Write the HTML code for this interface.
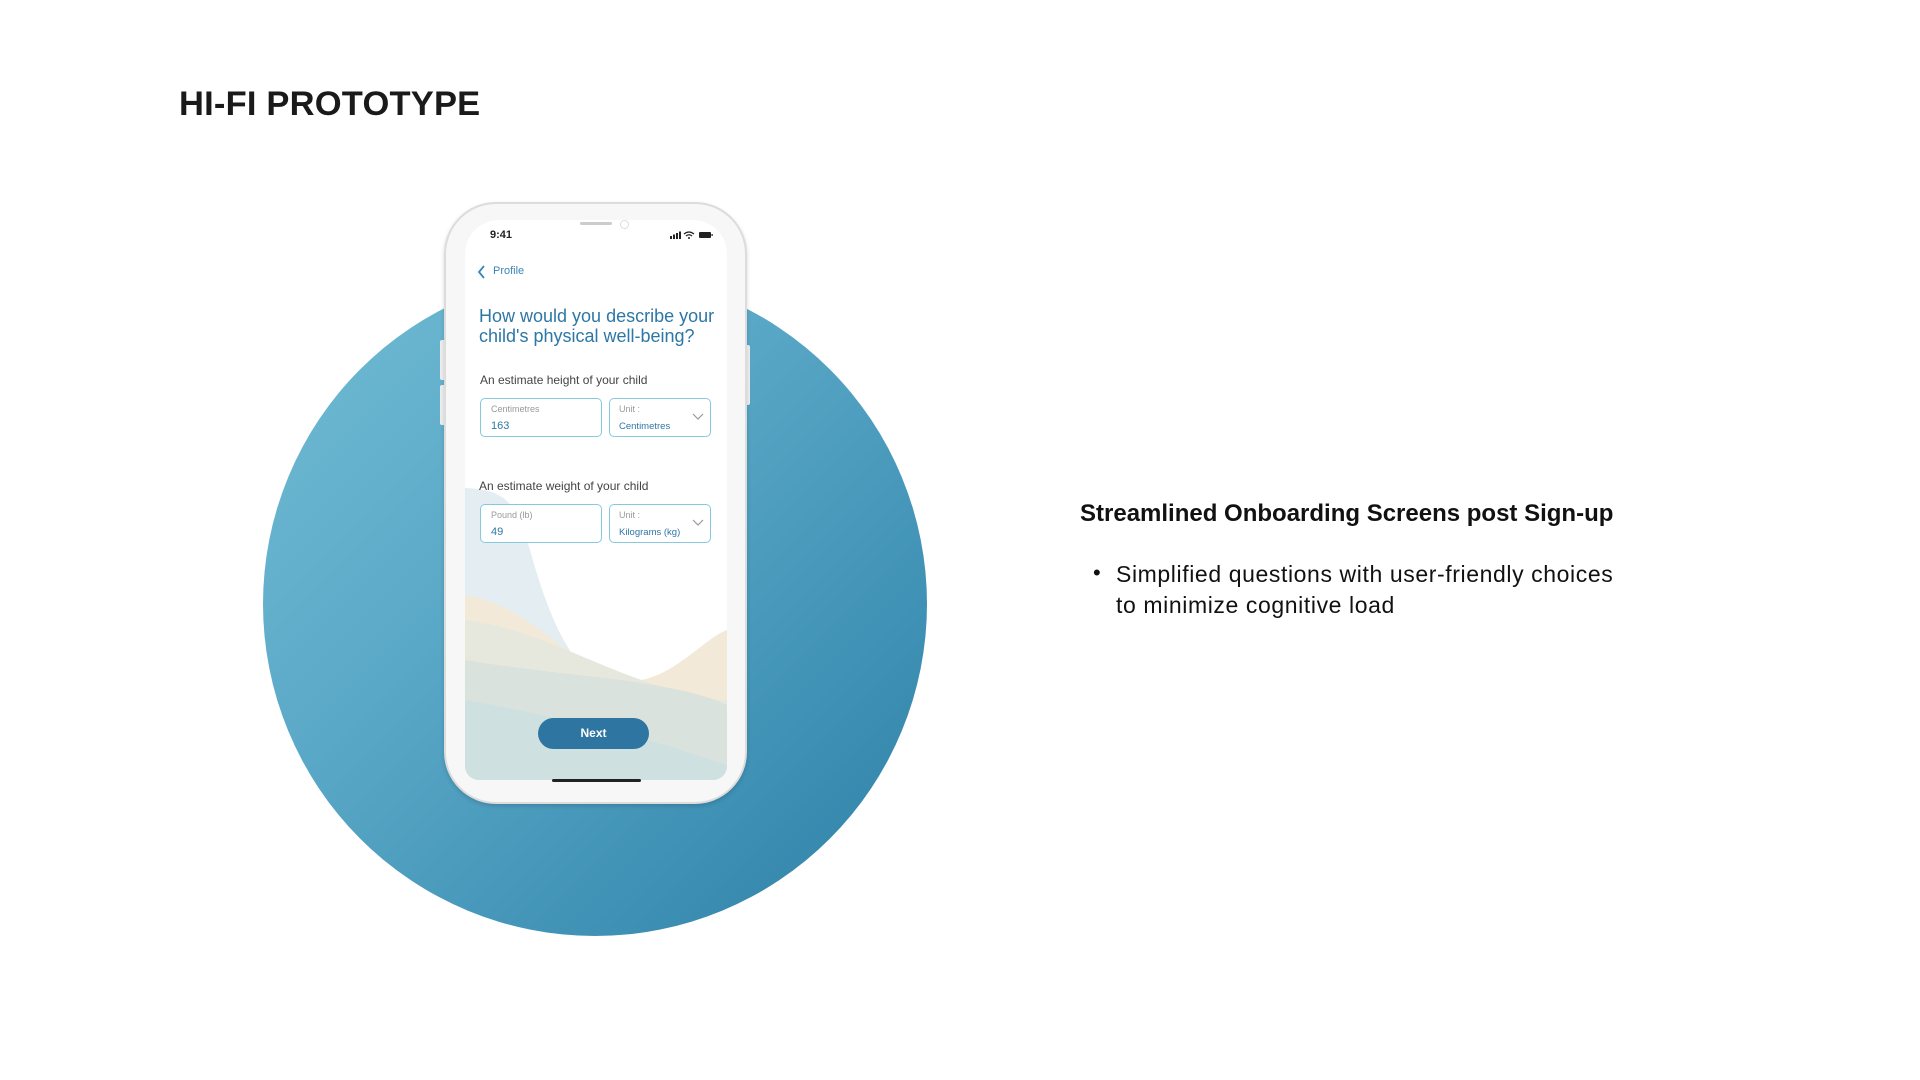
<!DOCTYPE html>
<html><head><style>
*{margin:0;padding:0;box-sizing:border-box}
body{width:1920px;height:1080px;background:#fff;position:relative;overflow:hidden;font-family:"Liberation Sans",sans-serif}
.abs{position:absolute}
h1{position:absolute;left:179px;top:85px;font-size:34.5px;font-weight:bold;color:#1a1a1a;letter-spacing:0.2px}
.circle{left:263px;top:272px;width:664px;height:664px;border-radius:50%;background:linear-gradient(135deg,#72bdd5 0%,#5aa8c7 40%,#3f91b5 75%,#2c7ea5 100%)}
.phone{left:444px;top:202px;width:303px;height:602px;border-radius:52px;background:#f7f7f7;border:2px solid #dcdcdc;box-shadow:0 2px 4px rgba(0,0,0,.15)}
.screen{left:465px;top:220px;width:262px;height:560px;border-radius:34px 34px 14px 14px;background:#fff;overflow:hidden}
.t{position:absolute;white-space:nowrap}
.box{position:absolute;border:1.5px solid #86c9de;border-radius:5px;background:#fff}
.lab{position:absolute;font-size:9px;color:#999}
.val{position:absolute;font-size:11px;color:#2f77a6}
</style></head><body>
<h1>HI-FI PROTOTYPE</h1>
<div class="abs circle"></div>
<div class="abs" style="left:440px;top:340px;width:6px;height:40px;background:#eee;border-radius:2px"></div>
<div class="abs" style="left:440px;top:385px;width:6px;height:40px;background:#eee;border-radius:2px"></div>
<div class="abs" style="left:745px;top:345px;width:5px;height:60px;background:#eee;border-radius:2px"></div>
<div class="abs phone"></div>
<div class="abs screen">
<svg class="abs" style="left:0;top:0" width="262" height="560" viewBox="0 0 262 560">
<path d="M0 268 C40 270 50 280 65 330 C85 400 110 470 170 472 C220 472 245 440 262 410 L262 560 L0 560Z" fill="#e4eef2"/>
<path d="M0 375 C60 385 90 430 150 460 C200 470 235 420 262 410 L262 560 L0 560Z" fill="#f3e9d8"/>
<path d="M0 400 C50 405 100 430 150 450 C200 470 240 480 262 480 L262 560 L0 560Z" fill="#e7e8dd"/>
<path d="M0 440 C60 450 120 455 170 462 C220 470 240 475 262 485 L262 560 L0 560Z" fill="#d9e2dd"/>
<path d="M0 480 C60 490 120 505 180 520 C220 530 245 540 262 545 L262 560 L0 560Z" fill="#cfe0e0"/>
</svg>
</div>
<div class="abs" style="left:580px;top:222px;width:32px;height:3px;border-radius:2px;background:#ccc"></div>
<div class="abs" style="left:620px;top:220px;width:9px;height:9px;border-radius:50%;border:1.5px solid #ddd"></div>
<div class="t" style="left:490px;top:229px;font-size:11px;font-weight:bold;color:#222">9:41</div>
<svg class="abs" style="left:670px;top:230px" width="44" height="10" viewBox="0 0 44 10">
<rect x="0" y="6" width="2" height="3" fill="#222"/><rect x="3" y="4.5" width="2" height="4.5" fill="#222"/><rect x="6" y="3" width="2" height="6" fill="#222"/><rect x="9" y="1.5" width="2" height="7.5" fill="#222"/>
<path d="M14 4 Q19 0 24 4 M16 6 Q19 3.5 22 6" stroke="#222" stroke-width="1.3" fill="none"/><circle cx="19" cy="8" r="1" fill="#222"/>
<rect x="29" y="2" width="12" height="6" rx="1" fill="#222"/><rect x="41.5" y="4" width="1.2" height="2" fill="#222"/>
</svg>
<svg class="abs" style="left:477px;top:265px" width="10" height="14"><path d="M7 1 L2 7 L7 13" stroke="#3a86b4" stroke-width="1.8" fill="none"/></svg>
<div class="t" style="left:493px;top:265px;font-size:11px;color:#3a86b4">Profile</div>
<div class="t" style="left:479px;top:306px;font-size:18px;line-height:20px;color:#2d77a6;letter-spacing:0px">How would you describe your<br>child's physical well-being?</div>
<div class="t" style="left:480px;top:373px;font-size:12px;color:#444">An estimate height of your child</div>
<div class="box" style="left:480px;top:398px;width:122px;height:39px"></div>
<div class="lab" style="left:491px;top:404px">Centimetres</div>
<div class="val" style="left:491px;top:420px">163</div>
<div class="box" style="left:609px;top:398px;width:102px;height:39px"></div>
<div class="lab" style="left:619px;top:404px">Unit :</div>
<div class="val" style="left:619px;top:421px;font-size:9.5px">Centimetres</div>
<svg class="abs" style="left:692px;top:413px" width="12" height="8"><path d="M1 1 L6 6 L11 1" stroke="#999" stroke-width="1.2" fill="none"/></svg>
<div class="t" style="left:479px;top:479px;font-size:12px;color:#444">An estimate weight of your child</div>
<div class="box" style="left:480px;top:504px;width:122px;height:39px"></div>
<div class="lab" style="left:491px;top:510px">Pound (lb)</div>
<div class="val" style="left:491px;top:526px">49</div>
<div class="box" style="left:609px;top:504px;width:102px;height:39px"></div>
<div class="lab" style="left:619px;top:510px">Unit :</div>
<div class="val" style="left:619px;top:527px;font-size:9.5px">Kilograms (kg)</div>
<svg class="abs" style="left:692px;top:519px" width="12" height="8"><path d="M1 1 L6 6 L11 1" stroke="#999" stroke-width="1.2" fill="none"/></svg>
<div class="abs" style="left:538px;top:718px;width:111px;height:31px;border-radius:16px;background:#2e76a1;color:#fff;font-size:12px;font-weight:bold;text-align:center;line-height:31px">Next</div>
<div class="abs" style="left:552px;top:779px;width:89px;height:3px;border-radius:2px;background:#222"></div>
<div class="t" style="left:1080px;top:500px;font-size:24px;font-weight:bold;color:#111">Streamlined Onboarding Screens post Sign-up</div>
<div class="t" style="left:1093px;top:560px;font-size:22px;color:#111">•</div>
<div class="t" style="left:1116px;top:559px;font-size:23px;line-height:31px;color:#111;letter-spacing:0.6px">Simplified questions with user-friendly choices<br>to minimize cognitive load</div>
</body></html>
